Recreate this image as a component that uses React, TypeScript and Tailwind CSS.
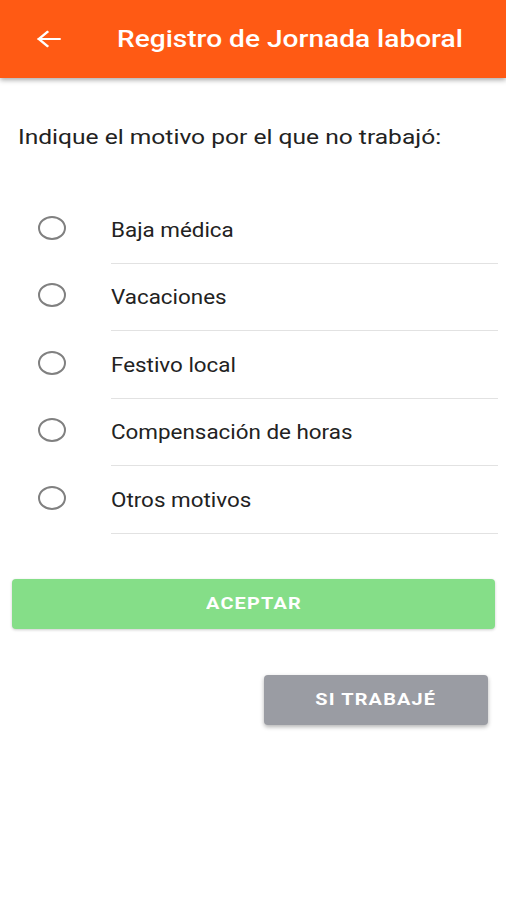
const options = ["Baja médica", "Vacaciones", "Festivo local", "Compensación de horas", "Otros motivos"];

// the screenshot is stretched horizontally (~1.17), so text spans get scale-x
export default function App() {
  return (
    <main className="w-[506px] h-[900px] bg-white overflow-hidden" style={{ fontFamily: "Roboto, 'Liberation Sans', sans-serif" }}>
      {/* Header */}
      <header className="h-[78px] bg-[#ff5a14] flex items-center shadow-[0_2px_5px_rgba(0,0,0,0.35)] relative">
        <div className="w-[117px] flex items-center pl-[34px] pb-[1px]">
          <svg width="29" height="24" viewBox="0 0 24 24" preserveAspectRatio="none" fill="none" stroke="white" strokeWidth="2.2" strokeLinecap="square">
            <path d="M21 12H4M11 5l-7 7 7 7" />
          </svg>
        </div>
        <h1 className="text-white text-[24px] font-medium leading-none inline-block origin-left scale-x-[1.17] whitespace-nowrap">Registro de Jornada laboral</h1>
      </header>

      {/* Prompt */}
      <p className="text-[21px] text-[#222] pl-[18px] pt-[45px] leading-[28px]">
        <span className="inline-block origin-left scale-x-[1.17] whitespace-nowrap">Indique el motivo por el que no trabajó:</span>
      </p>

      {/* Options */}
      <div className="mt-[45px] pr-[8px]">
        {options.map((o) => (
          <div key={o} className="flex h-[67.5px]">
            <div className="w-[111px] flex items-center justify-center pr-[8px] pb-[4px]">
              <span className="w-[28px] h-[24px] rounded-[50%] border-[2.5px] border-[#808080]" />
            </div>
            <div className="flex-1 flex items-center border-b border-[#e2e2e2] text-[20px] text-[#222] pt-[1px]">
              <span className="inline-block origin-left scale-x-[1.12] whitespace-nowrap">{o}</span>
            </div>
          </div>
        ))}
      </div>

      {/* Buttons */}
      <div className="px-[12px] pr-[11px] mt-[45px]">
        <button className="w-full h-[50px] rounded-[4px] bg-[#85de88] text-white font-bold text-[17px] tracking-[1px] shadow-[0_1px_3px_rgba(0,0,0,0.2)]">
          <span className="inline-block scale-x-[1.17]">ACEPTAR</span>
        </button>
      </div>
      <div className="flex justify-end pr-[18px] mt-[46px]">
        <button className="w-[224px] h-[50px] rounded-[4px] bg-[#9a9ca3] text-white font-bold text-[17px] tracking-[1px] shadow-[0_2px_4px_rgba(0,0,0,0.3)]">
          <span className="inline-block scale-x-[1.17]">SI TRABAJÉ</span>
        </button>
      </div>
    </main>
  );
}
